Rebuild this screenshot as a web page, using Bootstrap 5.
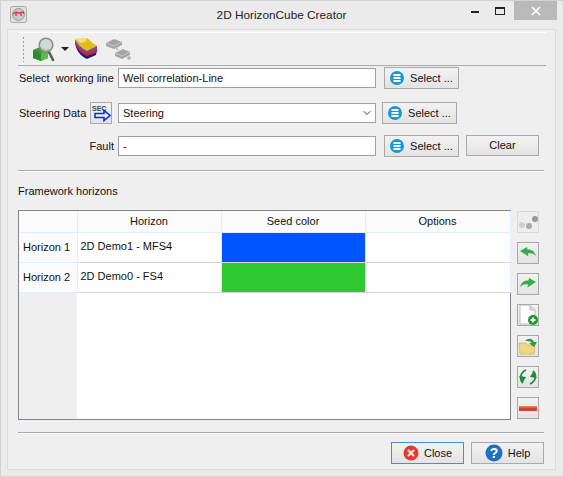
<!DOCTYPE html>
<html lang="en">
<head>
    <meta charset="UTF-8">
    <meta name="viewport" content="width=device-width, initial-scale=1.0">
    <title>2D HorizonCube Creator</title>
    <link href="https://cdn.jsdelivr.net/npm/bootstrap@5.3.0/dist/css/bootstrap.min.css" rel="stylesheet">
    <style>
        html, body {
            margin: 0;
            background: #ebebeb;
        }
        body {
            font-family: "Liberation Sans", Arial, sans-serif;
            font-size: 11px;
            color: #111;
            overflow: hidden;
        }
        .app-window {
            width: 564px;
            height: 477px;
            border: 1px solid #d2d2d2;
            background: #ebebeb;
        }
        .title-bar {
            height: 28px;
            padding-left: 9px;
        }
        .app-logo {
            width: 17px;
            height: 17px;
            margin-top: -1px;
        }
        .title-text {
            font-size: 11.8px;
            color: #222;
            padding-left: 65px;
            padding-top: 1px;
        }
        .win-btns {
            height: 19px;
            align-self: flex-start;
            margin-right: 6px;
        }
        .win-min {
            width: 8px;
            height: 2px;
            background: #222;
            margin-top: 10px;
            margin-right: 16px;
        }
        .win-max {
            width: 10px;
            height: 8px;
            border: 1px solid #222;
            border-top-width: 2px;
            margin-top: 6px;
            margin-right: 9px;
        }
        .win-close {
            width: 43px;
            height: 19px;
            background: #b9b9b9;
            color: #fff;
        }
        .main-panel {
            margin: 0 7px 0 6px;
            height: 441px;
            border: 1px solid #dcdcdc;
            background: #efefef;
            padding: 2px 9px 0 10px;
        }
        .tool-strip {
            height: 34px;
            border-top: 1px solid #fff;
            border-bottom: 1px solid #a9a9a9;
            padding-left: 4px;
        }
        .tool-grip {
            width: 3px;
            height: 26px;
            background-image: radial-gradient(circle, #9a9a9a 1px, transparent 1px);
            background-size: 3px 4px;
            margin-right: 8px;
        }
        .icon-caret {
            margin-left: 6px;
        }
        .icon-layers {
            margin-left: 6px;
        }
        .icon-link-grey {
            margin-left: 8px;
        }
        .form-stack {
            padding-top: 1px;
        }
        .form-line {
            height: 22px;
            margin-bottom: 11px;
        }
        .form-line.first-line {
            margin-bottom: 13px;
        }
        .line-label {
            width: 95px;
            margin-left: 1px;
            white-space: pre;
        }
        .line-label.short-label {
            width: 71px;
        }
        .qt-field.form-control,
        .qt-field.form-select {
            width: 258px;
            height: 20px;
            min-height: 0;
            margin-left: 4px;
            padding: 0 4px;
            font-size: 11px;
            line-height: 18px;
            color: #111;
            border: 1px solid #a0a0a0;
            border-radius: 0;
            box-shadow: none;
        }
        .qt-field.form-select {
            margin-left: 6px;
            background-position: right 3px center;
            background-size: 10px 8px;
        }
        .qt-btn.btn {
            height: 22px;
            padding: 0;
            font-size: 11px;
            color: #111;
            border: 1px solid #a9a9a9;
            border-radius: 0;
            background: linear-gradient(#f2f2f2, #e3e3e3);
        }
        .select-btn.btn {
            width: 75px;
            margin-left: 8px;
            gap: 6px;
        }
        .select-btn.tight {
            margin-left: 6px;
        }
        .clear-btn.btn {
            width: 73px;
            height: 21px;
            margin-left: 7px;
            align-self: flex-start;
        }
        .steer-btn.btn {
            width: 22px;
            flex: none;
        }
        .rule-line {
            border-top: 1px solid #a9a9a9;
            border-bottom: 1px solid #fff;
            height: 2px;
            margin-right: 2px;
        }
        .rule-upper {
            margin-top: 2px;
        }
        .rule-lower {
            margin-top: 12px;
        }
        .section-title {
            height: 38px;
            padding-top: 11px;
        }
        .grid-wrap {
            height: 210px;
        }
        .grid-box {
            width: 493px;
            height: 210px;
            border: 1px solid #84848f;
            background: #fff;
            position: relative;
        }
        .grid-box::before {
            content: "";
            position: absolute;
            left: 0;
            top: 0;
            bottom: 0;
            width: 58px;
            background: #efefef;
        }
        .hz-table {
            width: 491px;
            table-layout: fixed;
            border-collapse: collapse;
            position: relative;
        }
        .hz-table th, .hz-table td {
            padding: 0 3px;
            font-weight: 400;
            border-right: 1px solid #e4eefb;
            border-bottom: 1px solid #d6d6d6;
            white-space: nowrap;
        }
        .hz-table thead th {
            height: 21px;
            text-align: center;
            background: #fbfbfb;
            border-bottom: 1px solid #e4eefb;
        }
        .hz-table tbody td {
            height: 30px;
            background: #fff;
            padding-bottom: 1px;
        }
        .hz-table tbody th {
            height: 30px;
            text-align: left;
            padding-left: 4px;
            padding-top: 1px;
            background: #fbfbfb;
            border-bottom: 1px solid #e4eefb;
        }
        .seed-blue { background: #0055ff !important; }
        .seed-green { background: #30c830 !important; }
        .side-tools {
            margin-left: 6px;
            padding-top: 1px;
            gap: 9px;
        }
        .side-btn.btn {
            width: 22px;
            height: 22px;
            flex: none;
        }
        .side-btn.off {
            border-color: #dadada;
            background: #eeeeee;
        }
        .foot-btn.btn {
            width: 73px;
            height: 22px;
            gap: 5px;
        }
        .foot-btn.active-default {
            border-color: #3f8fdf;
        }
        .foot-area {
            padding-top: 8px;
            gap: 7px;
            padding-right: 2px;
        }
    </style>
</head>
<body>
<div class="app-window">
    <!-- title bar -->
    <div class="title-bar d-flex align-items-center">
        <svg class="app-logo" viewBox="0 0 17 17">
            <rect x="0.5" y="0.5" width="16" height="16" rx="2" fill="#e0e0e0" stroke="#a8a8a8"/>
            <circle cx="8.5" cy="8.5" r="6" fill="#c9c9c9" stroke="#999"/>
            <path d="M3 8l3-2 3 1 4-1 1 2M6 6v4M11 7v3" stroke="#ee3344" stroke-width="1.4" fill="none"/>
        </svg>
        <div class="title-text flex-grow-1 text-center">2D HorizonCube Creator</div>
        <div class="win-btns d-flex">
            <div class="win-min"></div>
            <div class="win-max"></div>
            <div class="win-close d-flex align-items-center justify-content-center">
                <svg width="10" height="10" viewBox="0 0 10 10"><path d="M1 1l8 8M9 1l-8 8" stroke="#fff" stroke-width="1.6"/></svg>
            </div>
        </div>
    </div>

    <div class="main-panel">
        <!-- toolbar -->
        <div class="tool-strip d-flex align-items-center">
            <div class="tool-grip"></div>
            <svg width="22" height="25" viewBox="0 0 22 25">
                <path d="M0 13l7-3 8 3v8l-7 3-8-3z" fill="#3f9a3c"/>
                <path d="M0 13l8 3v8l-8-3z" fill="#2f8c2c"/>
                <path d="M8 16l7-3v8l-7 3z" fill="#5cb84c"/>
                <path d="M15 13l5 10" stroke="#5c5c5c" stroke-width="2.6" stroke-linecap="round"/>
                <circle cx="13" cy="8" r="6.800" fill="#c5d6cf" fill-opacity=".8" stroke="#8c8c8c" stroke-width="1.6"/>
            </svg>
            <svg class="icon-caret" width="8" height="4" viewBox="0 0 8 4"><path d="M0 0h8l-4 4z" fill="#222"/></svg>
            <svg class="icon-layers" width="22" height="22" viewBox="0 0 22 22">
                <path d="M0 5c1 7 5 13 12 16l9-4 1-6z" fill="#20206e"/>
                <path d="M0 3c1 7 5 12 12 15l10-4v-4z" fill="#c4283a"/>
                <path d="M0 2c1 6 5 10 12 13l10-4V8z" fill="#7a4aa0"/>
                <path d="M0 1l11-1c3 0 4 4 11 8l-10 5C6 10 2 6 0 1z" fill="#e0bc1c"/>
                <path d="M0 1l11-1c1 3 0 4-5 5z" fill="#f1df7a"/>
            </svg>
            <svg class="icon-link-grey" width="26" height="22" viewBox="0 0 26 22">
                <path d="M1 5l8-4 8 3v3l-8 4-8-3z" fill="#a4a4a4"/>
                <path d="M1 5l8 3 8-4" fill="none" stroke="#c8c8c8"/>
                <path d="M10 15l8-4 7 3v3l-8 4-7-3z" fill="#a4a4a4"/>
                <path d="M10 15l7 3 8-4" fill="none" stroke="#c8c8c8"/>
                <path d="M11 10l2 2M22 20h4M24 18v4" stroke="#b0b0b0" stroke-width="1.4"/>
            </svg>
        </div>

        <!-- form rows -->
        <div class="form-stack d-flex flex-column">
            <div class="form-line first-line d-flex align-items-center">
                <div class="line-label">Select  working line</div>
                <input class="qt-field form-control" type="text" value="Well correlation-Line">
                <button class="qt-btn select-btn btn d-flex align-items-center justify-content-center" type="button">
                    <svg width="14" height="14" viewBox="0 0 14 14"><circle cx="7" cy="7" r="7" fill="#1398d8"/><path d="M3.500 4h7M3.500 7h7M3.500 10h7" stroke="#fff" stroke-width="1.800"/></svg>
                    Select ...
                </button>
            </div>
            <div class="form-line d-flex align-items-center">
                <div class="line-label short-label">Steering Data</div>
                <button class="qt-btn steer-btn btn d-flex align-items-center justify-content-center" type="button">
                    <svg width="20" height="20" viewBox="0 0 20 20">
                        <circle cx="9" cy="8" r="7" fill="#e8eef5"/>
                        <text x="1" y="8" font-size="7" font-weight="700" fill="#445" font-family="Liberation Sans, sans-serif">SEC</text>
                        <path d="M4 10.500h9v-3l6 5-6 5v-3h-9z" fill="#e8f0ff" stroke="#1428e0" stroke-width="1.600"/>
                    </svg>
                </button>
                <select class="qt-field form-select">
                    <option>Steering</option>
                </select>
                <button class="qt-btn select-btn tight btn d-flex align-items-center justify-content-center" type="button">
                    <svg width="14" height="14" viewBox="0 0 14 14"><circle cx="7" cy="7" r="7" fill="#1398d8"/><path d="M3.500 4h7M3.500 7h7M3.500 10h7" stroke="#fff" stroke-width="1.800"/></svg>
                    Select ...
                </button>
            </div>
            <div class="form-line d-flex align-items-center">
                <div class="line-label text-end">Fault</div>
                <input class="qt-field form-control" type="text" value="-">
                <button class="qt-btn select-btn btn d-flex align-items-center justify-content-center" type="button">
                    <svg width="14" height="14" viewBox="0 0 14 14"><circle cx="7" cy="7" r="7" fill="#1398d8"/><path d="M3.500 4h7M3.500 7h7M3.500 10h7" stroke="#fff" stroke-width="1.800"/></svg>
                    Select ...
                </button>
                <button class="qt-btn clear-btn btn" type="button">Clear</button>
            </div>
        </div>

        <div class="rule-line rule-upper"></div>
        <div class="section-title">Framework horizons</div>

        <!-- horizons grid with side tools -->
        <div class="grid-wrap d-flex">
            <div class="grid-box">
                <table class="hz-table">
                    <colgroup><col style="width:58px"><col style="width:144px"><col style="width:144px"><col style="width:145px"></colgroup>
                    <thead>
                        <tr><th></th><th>Horizon</th><th>Seed color</th><th>Options</th></tr>
                    </thead>
                    <tbody>
                        <tr><th>Horizon 1</th><td>2D Demo1 - MFS4</td><td class="seed-blue"></td><td></td></tr>
                        <tr><th>Horizon 2</th><td>2D Demo0 - FS4</td><td class="seed-green"></td><td></td></tr>
                    </tbody>
                </table>
            </div>
            <div class="side-tools d-flex flex-column">
                <button class="qt-btn side-btn off btn p-0" type="button">
                    <svg width="20" height="20" viewBox="0 0 20 20"><circle cx="4" cy="13" r="3" fill="#d0d0d0"/><circle cx="11" cy="14" r="3" fill="#a8a8a8"/><circle cx="17" cy="7" r="3" fill="#989898"/></svg>
                </button>
                <button class="qt-btn side-btn btn p-0" type="button">
                    <svg width="20" height="20" viewBox="0 0 20 20"><path d="M2 8l7-4 .5 2.500c4-.5 7 1.500 8.500 6.500-3-2.500-5-3-8-2.500l.5 3z" fill="#35ad4c"/></svg>
                </button>
                <button class="qt-btn side-btn btn p-0" type="button">
                    <svg width="20" height="20" viewBox="0 0 20 20"><path d="M18 8l-7-4-.5 2.500c-4-.5-7 1.500-8.500 6.500 3-2.500 5-3 8-2.500l-.5 3z" fill="#35ad4c"/></svg>
                </button>
                <button class="qt-btn side-btn btn p-0" type="button">
                    <svg width="20" height="20" viewBox="0 0 20 20"><path d="M2 0h10l5 5v14H2z" fill="#fff" stroke="#bbb"/><path d="M12 0v5h5" fill="#ddd" stroke="#bbb"/><circle cx="15" cy="15" r="5" fill="#1c9a2e"/><path d="M12.500 15h5M15 12.500v5" stroke="#fff" stroke-width="1.800"/></svg>
                </button>
                <button class="qt-btn side-btn btn p-0" type="button">
                    <svg width="20" height="20" viewBox="0 0 20 20"><path d="M1 7h7l1 2h8l-1 9H2z" fill="#f0d67c" stroke="#c8a850" stroke-width=".6"/><path d="M7 5c3-3 7-3 9 1l3 0-3 5-5-4 3 0c-2-2-4-2-7-2z" fill="#2e9a3e"/></svg>
                </button>
                <button class="qt-btn side-btn btn p-0" type="button">
                    <svg width="20" height="20" viewBox="0 0 20 20">
                        <path d="M5 16c-4-4-3-10 3-13" fill="none" stroke="#1f8a3a" stroke-width="1.800"/>
                        <path d="M1 9l4 6 3-5z" fill="#1f8a3a"/>
                        <path d="M15 4c4 4 3 10-3 13" fill="none" stroke="#1f8a3a" stroke-width="1.800"/>
                        <path d="M19 11l-4-6-3 5z" fill="#1f8a3a"/>
                    </svg>
                </button>
                <button class="qt-btn side-btn btn p-0" type="button">
                    <svg width="20" height="20" viewBox="0 0 20 20"><rect x="1" y="8" width="18" height="5" fill="#d8402a"/><rect x="1" y="8" width="18" height="1.500" fill="#f08050"/></svg>
                </button>
            </div>
        </div>

        <div class="rule-line rule-lower"></div>

        <!-- footer buttons -->
        <div class="foot-area d-flex justify-content-end">
            <button class="qt-btn foot-btn active-default btn d-flex align-items-center justify-content-center" type="button">
                <svg width="16" height="16" viewBox="0 0 16 16"><circle cx="8" cy="8" r="7.500" fill="#e23a36"/><path d="M5 5l6 6M11 5l-6 6" stroke="#f7e3e0" stroke-width="2.200"/></svg>
                Close
            </button>
            <button class="qt-btn foot-btn btn d-flex align-items-center justify-content-center" type="button">
                <svg width="18" height="18" viewBox="0 0 18 18">
                    <circle cx="9" cy="9" r="8.500" fill="#1f6fc4"/>
                    <text x="9" y="14" text-anchor="middle" font-size="14" font-weight="700" fill="#fff" font-family="Liberation Sans, sans-serif">?</text>
                </svg>
                Help
            </button>
        </div>
    </div>
</div>
<script src="https://cdn.jsdelivr.net/npm/bootstrap@5.3.0/dist/js/bootstrap.bundle.min.js"></script>
</body>
</html>
